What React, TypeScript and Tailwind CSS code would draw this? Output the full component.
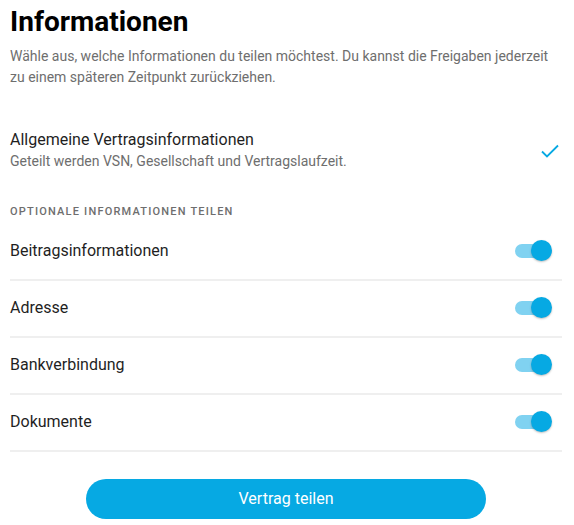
import React, { useState } from "react";

const font = { fontFamily: "Roboto, 'Noto Sans', sans-serif" };

const optional = ["Beitragsinformationen", "Adresse", "Bankverbindung", "Dokumente"];

function Toggle({ on, onChange }: { on: boolean; onChange: () => void }) {
  return (
    <button
      type="button"
      onClick={onChange}
      className="relative mr-[10px] flex h-[22px] w-[37px] items-center"
      aria-pressed={on}
    >
      <span
        className={`absolute left-0 h-[14px] w-[30px] rounded-full ${
          on ? "bg-[#80d2f1]" : "bg-gray-300"
        }`}
      />
      <span
        className={`absolute top-0 h-[21px] w-[21px] rounded-full shadow-[0_1px_2px_rgba(0,0,0,0.25)] ${
          on ? "left-[16px] bg-[#06a9e3]" : "left-0 bg-white"
        }`}
      />
    </button>
  );
}

export default function App() {
  const [shared, setShared] = useState<boolean[]>([true, true, true, true]);

  return (
    <div className="min-h-screen bg-white pl-[10px] pr-[12px] pt-[4px] text-[#1f1f1f]" style={font}>
      <h1 className="text-[28px] font-bold leading-[36px] text-black">Informationen</h1>
      <p className="mt-[6px] text-[14px] leading-[21px] text-[#6e6e6e]">
        Wähle aus, welche Informationen du teilen möchtest. Du kannst die Freigaben jederzeit zu
        einem späteren Zeitpunkt zurückziehen.
      </p>

      {/* Allgemeine Vertragsinformationen */}
      <div className="mt-[41px] flex items-center justify-between">
        <div>
          <div className="text-[16px] leading-[22px] text-[#1f1f1f]">Allgemeine Vertragsinformationen</div>
          <div className="text-[14px] leading-[20px] text-[#6e6e6e]">
            Geteilt werden VSN, Gesellschaft und Vertragslaufzeit.
          </div>
        </div>
        <svg width="18" height="14" viewBox="0 0 18 14" className="mr-[3px] mt-[2px]">
          <path d="M1 7.5 L6 12.5 L17 1.5" fill="none" stroke="#06a9e3" strokeWidth="1.8" />
        </svg>
      </div>

      <div className="mt-[33px] text-[11px] font-medium tracking-[1.2px] text-[#6e6e6e]">
        OPTIONALE INFORMATIONEN TEILEN
      </div>

      <div className="mt-[3px]">
        {optional.map((label, i) => (
          <div
            key={label}
            className="flex h-[57px] items-center justify-between border-b-2 border-[#efefef]"
          >
            <span className="text-[16px] text-[#1f1f1f]">{label}</span>
            <Toggle
              on={shared[i]}
              onChange={() => setShared((s) => s.map((v, j) => (j === i ? !v : v)))}
            />
          </div>
        ))}
      </div>

      <div className="mt-[27px] flex justify-center">
        <button
          type="button"
          className="h-[40px] w-[400px] rounded-full bg-[#06a9e3] text-[16px] text-white"
        >
          Vertrag teilen
        </button>
      </div>
    </div>
  );
}
